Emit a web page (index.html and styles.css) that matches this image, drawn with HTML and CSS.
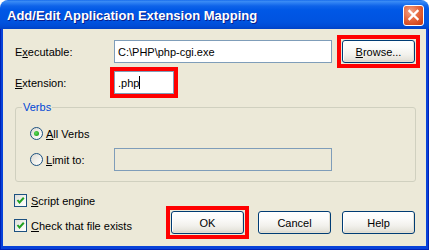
FILE: index.html
```html
<!DOCTYPE html>
<html>
<head>
<meta charset="utf-8">
<title>Add/Edit Application Extension Mapping</title>
<link rel="stylesheet" href="styles.css">
</head>
<body>
<div class="window">
  <div class="titlebar">
    <span class="title">Add/Edit Application Extension Mapping</span>
    <span class="close">
      <svg width="21" height="21" viewBox="0 0 21 21"><path d="M6.5 6 L14.5 14 M14.5 6 L6.5 14" stroke="#fff" stroke-width="2.4" stroke-linecap="square" fill="none"/></svg>
    </span>
  </div>
  <div class="frame">
    <div class="client">
      <div class="row row-exe">
        <span class="lbl">E<u>x</u>ecutable:</span>
        <div class="edit edit-exe">C:\PHP\php-cgi.exe</div>
        <button class="btn btn-browse mark"><u>B</u>rowse...</button>
      </div>
      <div class="row row-ext">
        <span class="lbl"><u>E</u>xtension:</span>
        <div class="edit edit-ext mark-tight">.php<span class="caret"></span></div>
      </div>
      <fieldset class="group">
        <legend>Verbs</legend>
        <div class="opt">
          <span class="radio on"><span class="dot"></span></span>
          <span class="optlbl"><u>A</u>ll Verbs</span>
        </div>
        <div class="opt opt-limit">
          <span class="radio"></span>
          <span class="optlbl optlbl-limit"><u>L</u>imit to:</span>
          <div class="edit edit-limit"></div>
        </div>
      </fieldset>
      <div class="bottom">
        <div class="checks">
          <div class="chk">
            <span class="box"><svg width="11" height="11" viewBox="0 0 11 11"><path d="M2.5 5 L4.5 7.5 L8.8 2.8" stroke="#21A121" stroke-width="2" fill="none"/></svg></span>
            <span><u>S</u>cript engine</span>
          </div>
          <div class="chk">
            <span class="box"><svg width="11" height="11" viewBox="0 0 11 11"><path d="M2.5 5 L4.5 7.5 L8.8 2.8" stroke="#21A121" stroke-width="2" fill="none"/></svg></span>
            <span><u>C</u>heck that file exists</span>
          </div>
        </div>
        <div class="buttons">
          <button class="btn btn-ok mark">OK</button>
          <button class="btn btn-cancel">Cancel</button>
          <button class="btn btn-help">Help</button>
        </div>
      </div>
    </div>
  </div>
</div>
</body>
</html>
```
FILE: styles.css
```css
html, body {
  margin: 0;
  padding: 0;
  background: #ffffff;
}
body {
  width: 429px;
  height: 250px;
  overflow: hidden;
  font-family: "Liberation Sans", Arial, sans-serif;
  font-size: 11px;
  color: #000;
}
.window {
  width: 429px;
  height: 250px;
  display: flex;
  flex-direction: column;
  border-radius: 8px 8px 0 0;
  overflow: hidden;
}
.titlebar {
  height: 29px;
  flex: none;
  display: flex;
  align-items: center;
  justify-content: space-between;
  padding: 0 5px 0 7px;
  box-sizing: border-box;
  background: linear-gradient(to bottom,
    #0A5FE8 0px, #3D8EF5 1px, #2B7EF2 3px, #0E63E9 6px,
    #0058E6 10px, #0055E3 16px, #0053DF 22px, #004CD6 26px, #0042C6 29px);
}
.title {
  color: #fff;
  font-family: "Liberation Sans", Arial, sans-serif;
  font-weight: bold;
  font-size: 13px;
  padding-top: 2px;
  text-shadow: 1px 1px 0 #0A1C8A;
  white-space: nowrap;
}
.close {
  align-self: flex-start;
  margin-top: 5px;
  width: 21px;
  height: 21px;
  box-sizing: border-box;
  border: 1px solid #fff;
  border-radius: 3px;
  background: radial-gradient(circle at 35% 30%, #F3A488 0%, #E5683F 45%, #D4461C 80%, #C23A14 100%);
  display: flex;
}
.close svg {
  margin: -1px;
}
.frame {
  flex: 1;
  padding: 0 3px 4px 3px;
  background: #0842D9;
  box-shadow: inset 1px 0 #0021B5, inset -1px 0 #0021B5, inset 0 -1px #0021B5;
  display: flex;
}
.client {
  flex: 1;
  background: #ECE9D8;
  display: flex;
  flex-direction: column;
}
.row {
  display: flex;
  align-items: center;
  height: 23px;
  padding-left: 12px;
}
.row-exe {
  margin-top: 11px;
}
.row-ext {
  margin-top: 8px;
}
.lbl {
  width: 99px;
  flex: none;
}
.edit {
  box-sizing: border-box;
  height: 23px;
  border: 1px solid #7F9DB9;
  background: #fff;
  padding-left: 3px;
  display: flex;
  align-items: center;
  white-space: nowrap;
}
.edit-exe {
  width: 218px;
}
.edit-ext {
  width: 60px;
}
.caret {
  display: inline-block;
  width: 1px;
  height: 13px;
  background: #000;
}
.edit-limit {
  width: 218px;
  background: #ECE9D8;
}
.btn {
  box-sizing: border-box;
  width: 73px;
  height: 23px;
  border: 1px solid #003C74;
  border-radius: 3px;
  background: linear-gradient(to bottom, #FFFFFF 0%, #FCFCFB 30%, #F2F1EC 65%, #E6E4DC 88%, #D6D0C5 100%);
  box-shadow: inset 1px 1px 0 #FFFFFF, inset -1px -1px 0 #E3E0D4;
  font-family: "Liberation Sans", Arial, sans-serif;
  font-size: 11px;
  color: #000;
  padding: 0;
  flex: none;
}
.btn-browse {
  margin-left: 10px;
}
.mark {
  position: relative;
}
.mark::after {
  content: "";
  position: absolute;
  inset: -6px;
  border: 4px solid #FF0000;
  pointer-events: none;
}
.mark-tight {
  position: relative;
}
.mark-tight::after {
  content: "";
  position: absolute;
  inset: -5px;
  border: 4px solid #FF0000;
}
.group {
  margin: 7px 0 0 12px;
  width: 401px;
  box-sizing: border-box;
  border: 1px solid #D0D0BF;
  border-radius: 3px;
  padding: 8px 0 10px 14px;
  min-width: 0;
}
.group legend {
  color: #0046D5;
  line-height: 13px;
  padding: 0 1px;
  margin-left: -8px;
}
.opt {
  display: flex;
  align-items: center;
  height: 23px;
}
.opt-limit {
  margin-top: 3px;
}
.radio {
  width: 13px;
  height: 13px;
  box-sizing: border-box;
  border: 1px solid #1C5180;
  border-radius: 50%;
  background: linear-gradient(135deg, #DCD9D1 0%, #F4F3EE 60%, #FFFFFF 100%);
  display: flex;
  align-items: center;
  justify-content: center;
  flex: none;
}
.dot {
  width: 5px;
  height: 5px;
  border-radius: 50%;
  background: radial-gradient(circle at 40% 40%, #5FDC5B 0%, #2FAE2B 60%, #1C8F1A 100%);
}
.optlbl {
  margin-left: 3px;
}
.optlbl-limit {
  width: 68px;
}
.bottom {
  flex: 1;
  display: flex;
  align-items: flex-end;
  padding: 0 11px 0 11px;
}
.checks {
  display: flex;
  flex-direction: column;
  gap: 12px;
  margin-bottom: 14px;
}
.chk {
  display: flex;
  align-items: center;
  height: 13px;
}
.box {
  width: 13px;
  height: 13px;
  box-sizing: border-box;
  border: 1px solid #1C5180;
  background: linear-gradient(135deg, #DCDCD7 0%, #F5F5F2 60%, #FFFFFF 100%);
  margin-right: 4px;
  display: flex;
}
.buttons {
  margin-left: auto;
  margin-bottom: 12px;
  display: flex;
}
.btn-cancel {
  margin-left: 14px;
}
.btn-help {
  margin-left: 11px;
}
```
